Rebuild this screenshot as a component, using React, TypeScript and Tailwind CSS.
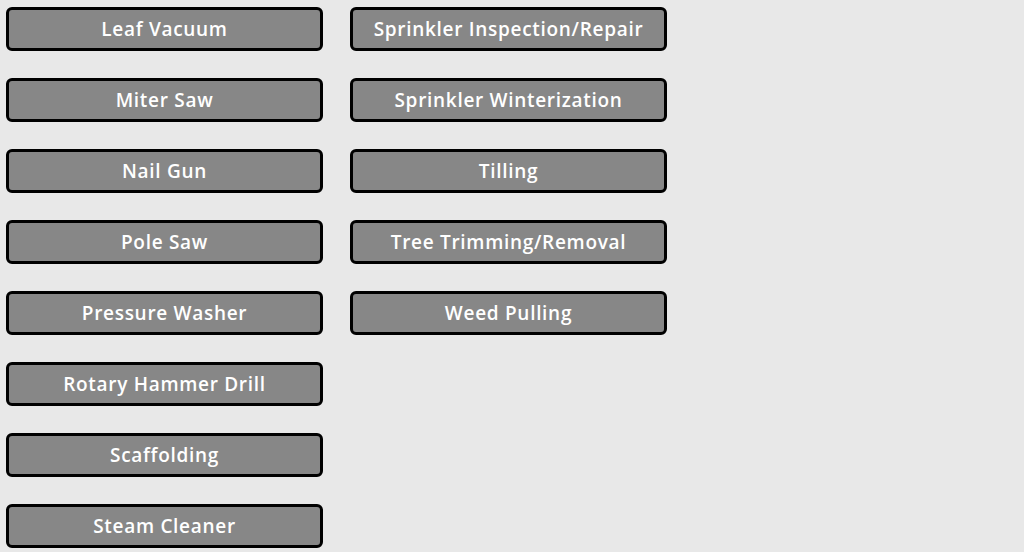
import React from 'react';

const leftItems = [
  'Leaf Vacuum',
  'Miter Saw',
  'Nail Gun',
  'Pole Saw',
  'Pressure Washer',
  'Rotary Hammer Drill',
  'Scaffolding',
  'Steam Cleaner',
];

const rightItems = [
  'Sprinkler Inspection/Repair',
  'Sprinkler Winterization',
  'Tilling',
  'Tree Trimming/Removal',
  'Weed Pulling',
];

const ServiceButton: React.FC<{ label: string }> = ({ label }) => (
  <button className="w-[317px] h-[44px] pt-[1px] rounded-[6px] border-[3px] border-black bg-[#878787] text-white text-[19px] font-semibold tracking-[0.7px] leading-none [font-family:'Open_Sans',sans-serif]">
    {label}
  </button>
);

const App: React.FC = () => {
  return (
    <div className="w-[1024px] h-[552px] overflow-hidden bg-[#e8e8e8]">
      <div className="flex gap-[27px] pl-[6px] pt-[7px]">
        <div className="flex flex-col gap-[27px]">
          {leftItems.map((item) => (
            <ServiceButton key={item} label={item} />
          ))}
        </div>
        <div className="flex flex-col gap-[27px]">
          {rightItems.map((item) => (
            <ServiceButton key={item} label={item} />
          ))}
        </div>
      </div>
    </div>
  );
};

export default App;
